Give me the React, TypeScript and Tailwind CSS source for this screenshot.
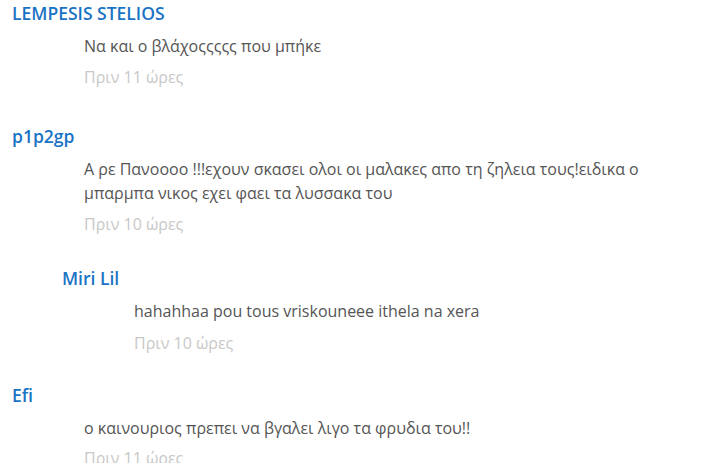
const comments = [
  {
    name: "LEMPESIS STELIOS",
    text: "Να και ο βλάχοςςςςς που μπήκε",
    time: "Πριν 11 ώρες",
    reply: false,
    gap: "mt-0",
    timeGap: "mt-[7px]",
  },
  {
    name: "p1p2gp",
    text: "Α ρε Πανοοοο !!!εχουν σκασει ολοι οι μαλακες απο τη ζηλεια τους!ειδικα ο μπαρμπα νικος εχει φαει τα λυσσακα του",
    time: "Πριν 10 ώρες",
    reply: false,
    gap: "mt-[34px]",
    timeGap: "mt-[7px]",
  },
  {
    name: "Miri Lil",
    text: "hahahhaa pou tous vriskouneee ithela na xera",
    time: "Πριν 10 ώρες",
    reply: true,
    gap: "mt-[29px]",
    timeGap: "mt-[8px]",
  },
  {
    name: "Efi",
    text: "ο καινουριος πρεπει να βγαλει λιγο τα φρυδια του!!",
    time: "Πριν 11 ώρες",
    reply: false,
    gap: "mt-[27px]",
    timeGap: "mt-[6px]",
  },
];

export default function App() {
  return (
    <div
      className="h-[463px] w-[706px] overflow-hidden bg-white pl-3 pr-[40px]"
      style={{ fontFamily: '"Open Sans", "Noto Sans", sans-serif' }}
    >
      {comments.map((c) => (
        <div key={c.name} className={`${c.gap} ${c.reply ? "pl-[50px]" : ""}`}>
          <div className="text-[17.5px] font-semibold leading-[26px] text-[#1a73c4]">
            {c.name}
          </div>
          <div className="pl-[72px]">
            <p className="mt-[8px] text-[16px] leading-[24px] text-[#555]">
              {c.text}
            </p>
            <div className={`${c.timeGap} text-[16px] leading-[24px] text-[#c8c8c8]`}>
              {c.time}
            </div>
          </div>
        </div>
      ))}
    </div>
  );
}
